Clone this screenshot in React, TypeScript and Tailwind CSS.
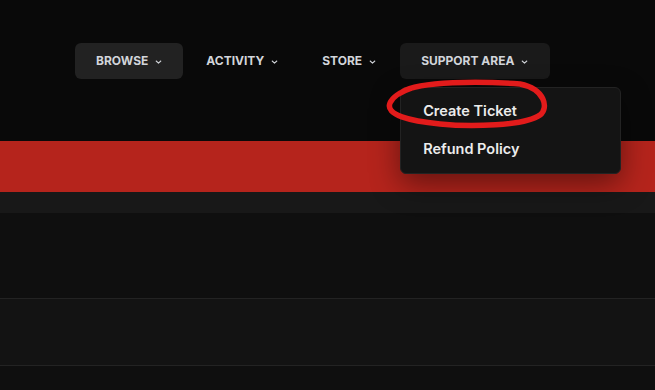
import React from 'react';

const navItems = [
  { label: 'Browse', active: true },
  { label: 'Activity' },
  { label: 'Store' },
  { label: 'Support Area', open: true },
];

const Chevron: React.FC = () => (
  <svg width="7" height="8" viewBox="0 0 7 8" className="ml-[7px] mt-px" aria-hidden>
    <path d="M1.2 3 L3.5 5.1 L5.8 3" fill="none" stroke="currentColor" strokeWidth="1.1" strokeLinecap="round" strokeLinejoin="round" />
  </svg>
);

const App: React.FC = () => {
  return (
    <div className="relative h-[390px] w-[655px] overflow-hidden bg-[#0f0f0f] font-['Inter',sans-serif]">
      <header className="relative z-20 h-[141px] bg-[#090909]">
        <nav className="flex gap-[2px] pl-[75px] pt-[43px]">
          {navItems.map((item) => (
            <div key={item.label} className="relative">
              <button
                className={
                  'flex h-9 items-center rounded-md px-[21px] text-[12px] font-bold uppercase text-[#d2d5da] ' +
                  (item.active ? 'bg-[#222222]' : item.open ? 'ml-px bg-[#1a1a1a] pr-[22px]' : 'bg-transparent')
                }
              >
                {item.label}
                <Chevron />
              </button>
              {item.open && (
                <div className="absolute left-px top-[44px] w-[221px] rounded-md border border-[#232323] bg-[#141414] px-1 pb-[5px] pt-1 shadow-[0_10px_30px_rgba(0,0,0,0.45)]">
                  <a className="flex h-[38px] items-center px-[18px] text-[14.5px] font-semibold text-[#ececec]">Create Ticket</a>
                  <a className="flex h-[38px] items-center px-[18px] text-[14.5px] font-semibold text-[#ececec]">Refund Policy</a>
                </div>
              )}
            </div>
          ))}
        </nav>
      </header>

      <div className="h-[51px] bg-[#b5241c]" />
      <div className="h-[21px] bg-[#181818]" />
      <div className="h-[86px] border-b border-[#232323] bg-[#0f0f0f]" />
      <div className="h-[67px] border-b border-[#232323] bg-[#131313]" />

      <svg className="pointer-events-none absolute inset-0 z-30" width="655" height="390" viewBox="0 0 655 390">
        <path
          d="M402 92 C420 81 480 81 520 84 C545 89 549 108 540 115 C525 126 470 127 440 124 C410 121 385 115 390 103 C393 96 400 92 412 88"
          fill="none"
          stroke="#e21b1b"
          strokeWidth="5.5"
          strokeLinecap="round"
          strokeLinejoin="round"
        />
      </svg>
    </div>
  );
};

export default App;
